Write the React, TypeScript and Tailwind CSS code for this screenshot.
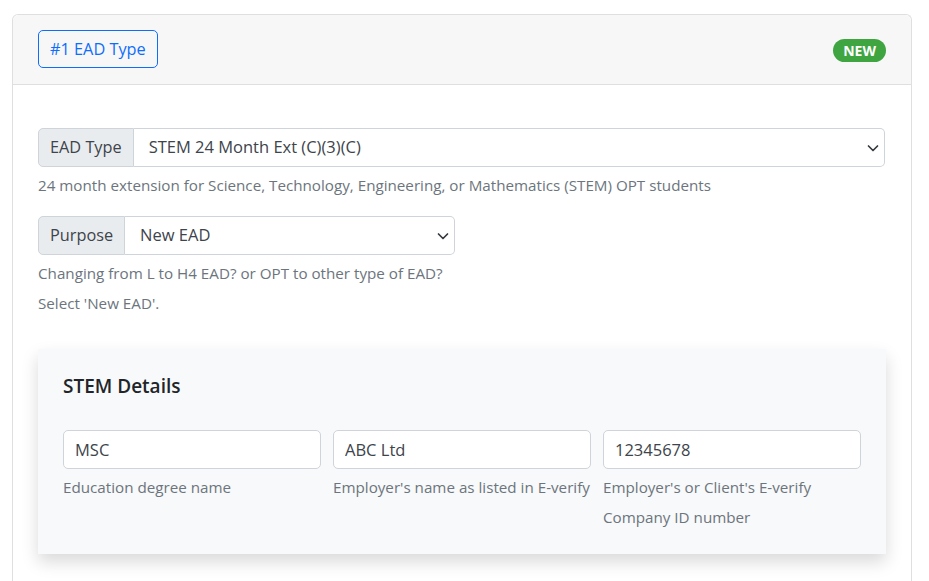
import { useState } from "react";

const Chevron = () => (
  <svg
    width="12"
    height="12"
    viewBox="0 0 12 12"
    fill="none"
    stroke="#343a40"
    strokeWidth="1.7"
    strokeLinecap="round"
    strokeLinejoin="round"
    className="pointer-events-none absolute right-[6px] top-1/2 -translate-y-1/2"
  >
    <path d="M1.5 4 6 8.5 10.5 4" />
  </svg>
);

const SelectGroup = ({
  label,
  value,
  options,
  onChange,
  width,
}: {
  label: string;
  value: string;
  options: string[];
  onChange: (v: string) => void;
  width: string;
}) => (
  <div className={`flex h-[39px] ${width}`}>
    <span className="flex items-center rounded-l-[5px] border border-[#ced4da] bg-[#e9ecef] px-[11px] text-[16.3px] text-[#3d444b]">
      {label}
    </span>
    <div className="relative flex-1">
      <select
        value={value}
        onChange={(e) => onChange(e.target.value)}
        className="h-full w-full appearance-none rounded-r-[5px] border border-l-0 border-[#ced4da] bg-white pl-[15px] pr-10 text-[16.5px] text-[#3d444b] outline-none"
      >
        {options.map((o) => (
          <option key={o} value={o}>
            {o}
          </option>
        ))}
      </select>
      <Chevron />
    </div>
  </div>
);

const HelpText = ({ children }: { children: React.ReactNode }) => (
  <div className="text-[15.2px] leading-[30px] text-[#6c757d]">{children}</div>
);

const App = () => {
  const [eadType, setEadType] = useState("STEM 24 Month Ext (C)(3)(C)");
  const [purpose, setPurpose] = useState("New EAD");
  const [degree, setDegree] = useState("MSC");
  const [employer, setEmployer] = useState("ABC Ltd");
  const [companyId, setCompanyId] = useState("12345678");

  const fields = [
    { value: degree, set: setDegree, help: ["Education degree name"] },
    { value: employer, set: setEmployer, help: ["Employer's name as listed in E-verify"] },
    { value: companyId, set: setCompanyId, help: ["Employer's or Client's E-verify", "Company ID number"] },
  ];

  return (
    <div
      className="min-h-[581px] bg-white pl-[12px] pt-[14px]"
      style={{ fontFamily: '"Open Sans", "Noto Sans", sans-serif' }}
    >
      <div className="w-[900px] rounded-t-[6px] border border-b-0 border-[#dfdfdf]">
        <div className="flex items-center justify-between rounded-t-[6px] border-b border-[#dfdfdf] bg-[#f7f7f7] px-[25px] pb-[16px] pt-[15px]">
          <button className="h-[38px] rounded-[5px] border border-[#0d6efd] px-[11px] text-[16.3px] text-[#0d6efd]">
            #1 EAD Type
          </button>
          <span className="mt-[3px] flex h-[23px] items-center rounded-full bg-[#3fa540] px-[10px] text-[14px] font-bold text-white">
            NEW
          </span>
        </div>

        <div className="px-[25px] pb-10 pt-[43px]">
          <SelectGroup
            label="EAD Type"
            value={eadType}
            onChange={setEadType}
            width="w-[847px]"
            options={["STEM 24 Month Ext (C)(3)(C)", "H4 EAD (C)(26)", "L2 EAD (A)(18)"]}
          />
          <div className="mt-[3px]">
            <HelpText>
              24 month extension for Science, Technology, Engineering, or Mathematics (STEM) OPT students
            </HelpText>
          </div>

          <div className="mt-[16px]">
            <SelectGroup
              label="Purpose"
              value={purpose}
              onChange={setPurpose}
              width="w-[417px]"
              options={["New EAD", "Renewal EAD", "Replacement EAD"]}
            />
          </div>
          <div className="mt-[3px]">
            <HelpText>Changing from L to H4 EAD? or OPT to other type of EAD?</HelpText>
            <HelpText>Select 'New EAD'.</HelpText>
          </div>

          <div className="mt-[31px] w-[848px] bg-[#f8f9fa] px-[25px] pb-[22px] pt-[25px] shadow-[0_8px_16px_rgba(0,0,0,0.15)]">
            <h5 className="text-[19px] font-semibold leading-[24px] text-[#212529]">STEM Details</h5>
            <div className="mt-[32px] grid grid-cols-3 gap-x-[12px]">
              {fields.map((f, i) => (
                <div key={i}>
                  <input
                    value={f.value}
                    onChange={(e) => f.set(e.target.value)}
                    className="h-[39px] w-full rounded-[5px] border border-[#ced4da] bg-white px-[11px] text-[16.5px] text-[#3d444b] outline-none"
                  />
                  <div className="mt-[3px] whitespace-nowrap">
                    {f.help.map((h) => (
                      <HelpText key={h}>{h}</HelpText>
                    ))}
                  </div>
                </div>
              ))}
            </div>
          </div>
        </div>
      </div>
    </div>
  );
};

export default App;
